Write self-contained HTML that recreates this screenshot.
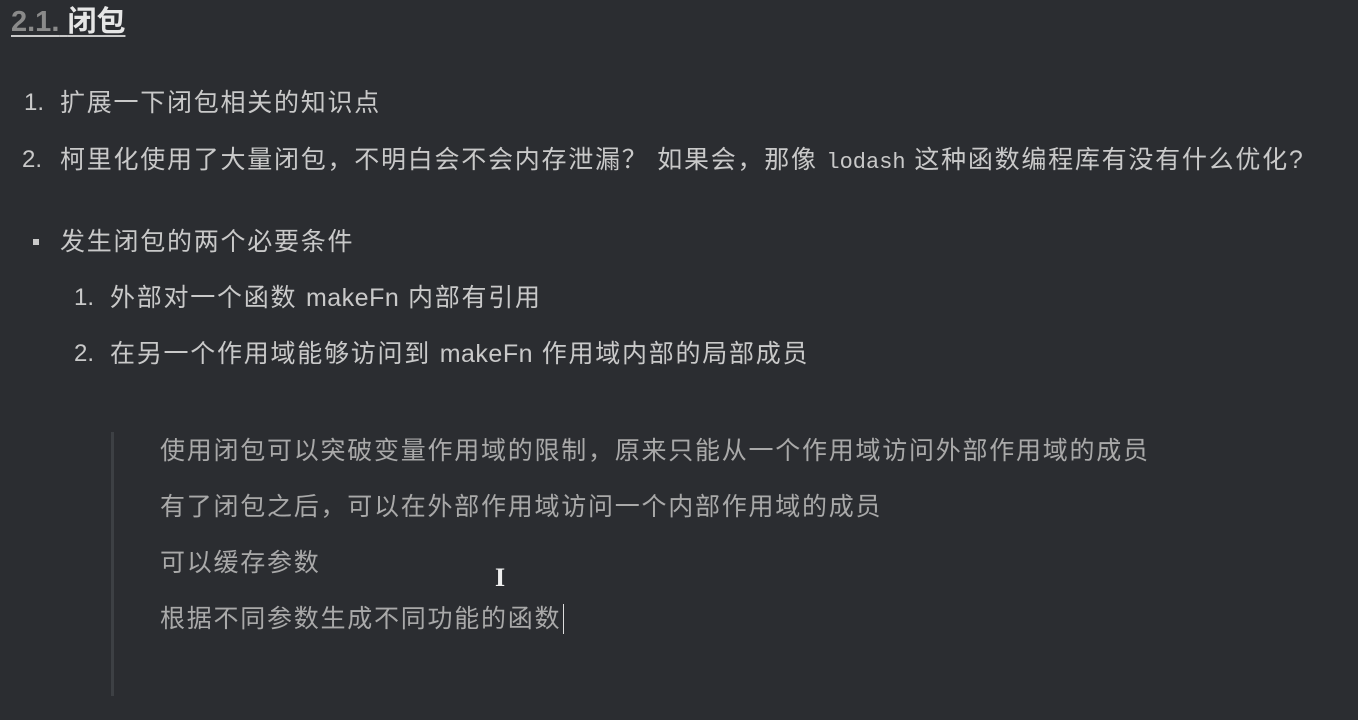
<!DOCTYPE html>
<html><head><meta charset="utf-8"><style>
body{margin:0;width:1358px;height:720px;background:#2b2d31;overflow:hidden;font-family:"Liberation Sans","Noto Sans CJK SC",sans-serif;color:#c9c9c9}
.l{position:absolute;white-space:nowrap;font-size:25px;letter-spacing:1.75px;line-height:30px}
.n{position:absolute;font-size:24px;line-height:30px}
.e{letter-spacing:0.5px}
.q{color:#a9a9a9}
code{font-family:"Liberation Mono",monospace;letter-spacing:0;font-size:22px}
.t{position:absolute;left:11px;top:4px;font-size:29px;font-weight:bold;line-height:36px;text-decoration:underline;text-underline-offset:4px}
</style></head><body>
<div class="t"><span style="color:#8a8a8a">2.1.</span> <span style="color:#e6e6e6">闭包</span></div>
<div class="n" style="left:24px;top:88px">1.</div><div class="l" style="left:60px;top:88px">扩展一下闭包相关的知识点</div>
<div class="n" style="left:22px;top:145px">2.</div><div class="l" style="left:60px;top:145px">柯里化使用了大量闭包，不明白会不会内存泄漏？ 如果会，那像 <code>lodash</code> 这种函数编程库有没有什么优化?</div>
<div style="position:absolute;left:33px;top:239px;width:6px;height:6px;background:#c9c9c9"></div>
<div class="l" style="left:60px;top:227px">发生闭包的两个必要条件</div>
<div class="n" style="left:74px;top:283px">1.</div><div class="l" style="left:110px;top:283px">外部对一个函数 <span class="e">makeFn</span> 内部有引用</div>
<div class="n" style="left:74px;top:339px">2.</div><div class="l" style="left:110px;top:339px">在另一个作用域能够访问到 <span class="e">makeFn</span> 作用域内部的局部成员</div>
<div style="position:absolute;left:111px;top:432px;width:3px;height:264px;background:#3d4044"></div>
<div class="l q" style="left:160px;top:436px">使用闭包可以突破变量作用域的限制，原来只能从一个作用域访问外部作用域的成员</div>
<div class="l q" style="left:160px;top:492px">有了闭包之后，可以在外部作用域访问一个内部作用域的成员</div>
<div class="l q" style="left:160px;top:548px">可以缓存参数</div>
<div class="l q" style="left:160px;top:604px">根据不同参数生成不同功能的函数</div>
<div style="position:absolute;left:563px;top:604px;width:1px;height:30px;background:#ddd"></div>
<div style="position:absolute;left:495px;top:563px;color:#eee;font-size:26px;font-weight:bold;font-family:'Liberation Serif',serif">I</div>
</body></html>
